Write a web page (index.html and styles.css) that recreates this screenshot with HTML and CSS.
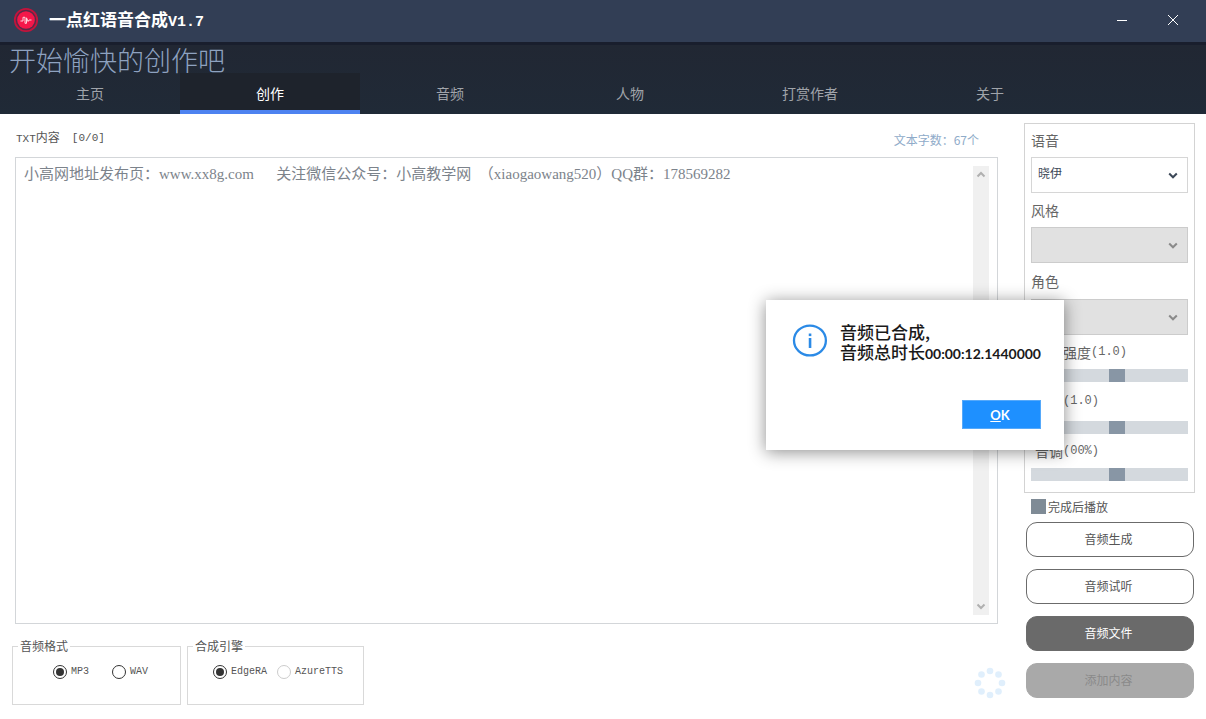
FILE: index.html
```html
<!DOCTYPE html>
<html lang="zh-CN">
<head>
<meta charset="utf-8">
<title>一点红语音合成V1.7</title>
<link rel="stylesheet" href="styles.css">
</head>
<body>
<div class="window">
  <header class="titlebar">
    <svg class="logo" viewBox="0 0 26 26" aria-hidden="true">
      <circle cx="13" cy="13" r="11.2" fill="#5a2a48" stroke="#c3143c" stroke-width="1.8"/>
      <circle cx="13" cy="13" r="8.8" fill="#f5174a"/>
      <path d="M7.5 14h2.500V10.300h2v6h1.500v-5.500l1.600 3.700.9-1.500h2.500" fill="none" stroke="#ffd5dd" stroke-width="1"/>
    </svg>
    <h1 class="app-name">一点红语音合成<span class="app-version">V1.7</span></h1>
    <div class="window-controls">
      <button class="window-button" type="button" aria-label="最小化">
        <svg viewBox="0 0 12 12"><path d="M1 6.5h10"/></svg>
      </button>
      <button class="window-button" type="button" aria-label="关闭">
        <svg viewBox="0 0 12 12"><path d="M1 1l10 10M11 1L1 11"/></svg>
      </button>
    </div>
  </header>

  <div class="banner">
    <p class="greeting">开始愉快的创作吧</p>
    <nav class="tabs">
      <a class="tab" href="#home">主页</a>
      <a class="tab tab-active" href="#create" aria-current="page">创作</a>
      <a class="tab" href="#audio">音频</a>
      <a class="tab" href="#people">人物</a>
      <a class="tab" href="#reward">打赏作者</a>
      <a class="tab" href="#about">关于</a>
    </nav>
  </div>

  <main class="workspace">
    <section class="editor-column">
      <div class="editor-head">
        <label class="editor-label" for="content"><span class="mono">TXT</span>内容</label>
        <span class="mono progress">[0/0]</span>
        <span class="char-count">文本字数：67个</span>
      </div>
      <div class="editor">
        <textarea id="content" class="editor-text" spellcheck="false">小高网地址发布页：www.xx8g.com&ensp;&ensp;&ensp;关注微信公众号：小高教学网&ensp;（xiaogaowang520）QQ群：178569282</textarea>
        <div class="scrollbar" aria-hidden="true">
          <svg viewBox="0 0 16 16"><path d="M4.500 10.500L8 7l3.500 3.500"/></svg>
          <svg viewBox="0 0 16 16"><path d="M4.500 5.500L8 9l3.500-3.500"/></svg>
        </div>
      </div>
      <div class="editor-foot">
        <fieldset class="group">
          <legend>音频格式</legend>
          <div class="options options-wide">
            <label class="option"><input type="radio" name="format" checked>MP3</label>
            <label class="option"><input type="radio" name="format">WAV</label>
          </div>
        </fieldset>
        <fieldset class="group">
          <legend>合成引擎</legend>
          <div class="options">
            <label class="option"><input type="radio" name="engine" checked>EdgeRA</label>
            <label class="option"><input type="radio" name="engine" disabled>AzureTTS</label>
          </div>
        </fieldset>
        <svg class="spinner" viewBox="0 0 32 32" aria-hidden="true">
          <circle cx="16" cy="4" r="3.300"/><circle cx="24.500" cy="7.500" r="3.300"/>
          <circle cx="28" cy="16" r="3.300"/><circle cx="24.500" cy="24.500" r="3.300"/>
          <circle cx="16" cy="28" r="3.300"/><circle cx="7.500" cy="24.500" r="3.300"/>
          <circle cx="4" cy="16" r="3.300"/><circle cx="7.500" cy="7.500" r="3.300"/>
        </svg>
      </div>
    </section>

    <aside class="settings">
      <div class="panel">
        <label class="field-label field-label-first" for="voice">语音</label>
        <div class="picker">
          <select id="voice"><option>晓伊</option></select>
          <svg viewBox="0 0 10 8"><path d="M1.200 1.500L5 5.300l3.800-3.800"/></svg>
        </div>
        <label class="field-label" for="style">风格</label>
        <div class="picker picker-disabled">
          <select id="style" disabled><option></option></select>
          <svg viewBox="0 0 10 8"><path d="M1.200 1.500L5 5.300l3.800-3.800"/></svg>
        </div>
        <label class="field-label field-label-role" for="role">角色</label>
        <div class="picker picker-disabled">
          <select id="role" disabled><option></option></select>
          <svg viewBox="0 0 10 8"><path d="M1.200 1.500L5 5.300l3.800-3.800"/></svg>
        </div>
        <label class="field-label slider-label" for="strength">风格强度<span class="mono">(1.0)</span></label>
        <input class="slider" id="strength" type="range" value="55">
        <label class="field-label slider-label field-label-rate" for="rate">语速<span class="mono">(1.0)</span></label>
        <input class="slider" id="rate" type="range" value="55">
        <label class="field-label slider-label" for="pitch">音调<span class="mono">(00%)</span></label>
        <input class="slider" id="pitch" type="range" value="55">
      </div>
      <label class="play-after"><input type="checkbox">完成后播放</label>
      <div class="actions">
        <button class="action" type="button">音频生成</button>
        <button class="action" type="button">音频试听</button>
        <button class="action action-dark" type="button">音频文件</button>
        <button class="action action-muted" type="button" disabled>添加内容</button>
      </div>
    </aside>
  </main>

  <div class="dialog" role="alertdialog" aria-labelledby="dialog-text">
    <div class="dialog-body">
      <svg class="info-icon" viewBox="0 0 36 36" aria-hidden="true">
        <ellipse cx="18" cy="18.500" rx="16" ry="15" fill="none" stroke="#2b8ae6" stroke-width="2.300"/>
        <rect x="16.800" y="16" width="2.600" height="10" fill="#2b8ae6"/>
        <rect x="16.800" y="11.500" width="2.600" height="2.600" fill="#2b8ae6"/>
      </svg>
      <p class="dialog-text" id="dialog-text">音频已合成,<br>音频总时长<span class="duration">00:00:12.1440000</span></p>
    </div>
    <button class="ok-button" type="button"><u>O</u>K</button>
  </div>
</div>
</body>
</html>
```
FILE: styles.css
```css
* {
  box-sizing: border-box;
}

body {
  margin: 0;
  background: #fff;
  color: #555;
  font-family: "Noto Sans CJK SC", sans-serif;
  font-size: 12px;
  line-height: 16px;
}

button,
select,
textarea {
  font: inherit;
  color: inherit;
}

.mono {
  font-family: "Liberation Mono", monospace;
}

.window {
  position: relative;
  display: flex;
  flex-direction: column;
  min-height: 100vh;
}

.titlebar {
  display: flex;
  align-items: center;
  height: 45px;
  padding: 0 8px 2px 13px;
  background: #323e55;
  border-bottom: 3px solid #191e2d;
}

.logo {
  width: 26px;
  height: 26px;
}

.app-name {
  margin: 0 auto 0 10px;
  padding-top: 2px;
  color: #fff;
  font-size: 17px;
  font-weight: 700;
  line-height: 24px;
}

.app-version {
  font-family: "Liberation Mono", monospace;
  font-size: 15px;
}

.window-controls {
  display: flex;
}

.window-button {
  display: grid;
  place-items: center;
  width: 51px;
  height: 40px;
  padding: 0;
  border: 0;
  background: none;
}

.window-button svg {
  width: 12px;
  height: 12px;
  fill: none;
  stroke: #fff;
  stroke-width: 1;
}

.banner {
  background: linear-gradient(#212733, #202a37);
}

.greeting {
  height: 28px;
  margin: 0;
  padding-left: 9px;
  color: #8ea2c0;
  font-size: 27px;
  font-weight: 300;
  line-height: 30px;
}

.tabs {
  display: flex;
}

.tab {
  width: 180px;
  height: 41px;
  border-bottom: 4px solid transparent;
  color: #a0a4aa;
  font-size: 14px;
  line-height: 40px;
  text-align: center;
  text-decoration: none;
}

.tab-active {
  border-color: #4d82f0;
  background: #1e232c;
  color: #fff;
}

.workspace {
  display: flex;
  flex: 1;
  gap: 18px;
  padding: 0 11px 0 12px;
}

.editor-column {
  display: flex;
  flex: 1;
  flex-direction: column;
  padding-bottom: 14px;
}

.editor-head {
  display: flex;
  align-items: center;
  height: 43px;
  padding: 4px 27px 0 4px;
}

.editor-label .mono {
  font-size: 11px;
}

.progress {
  margin-left: 12px;
  font-size: 11px;
}

.char-count {
  margin-left: auto;
  padding-top: 4px;
  color: #8fabc9;
}

.editor {
  display: flex;
  flex: 1;
  margin: 0 8px 0 3px;
  padding: 8px;
  border: 1px solid #d3d6d9;
}

.editor-text {
  flex: 1;
  padding: 0;
  border: 0;
  outline: 0;
  overflow: hidden;
  resize: none;
  color: #7c838b;
  font-family: "Liberation Serif", "Noto Sans CJK SC", serif;
  font-size: 15px;
  line-height: 16px;
}

.scrollbar {
  display: flex;
  flex-direction: column;
  justify-content: space-between;
  width: 16px;
  background: #f0f0f0;
}

.scrollbar svg {
  width: 16px;
  height: 16px;
  fill: none;
  stroke: #b0b0b0;
  stroke-width: 2;
}

.editor-foot {
  display: flex;
  gap: 6px;
  padding-top: 14px;
}

.group {
  height: 67px;
  margin: 0;
  padding: 0 20px 0 25px;
  border: 1px solid #d9d9d9;
}

.group:first-child {
  padding: 0 32px 0 40px;
}

.group legend {
  margin-left: -20px;
  padding: 0 2px;
  line-height: 16px;
}

.group:first-child legend {
  margin-left: -35px;
}

.options {
  display: flex;
  gap: 10px;
  padding-top: 10px;
}

.options-wide {
  gap: 23px;
}

.option {
  display: flex;
  align-items: center;
  gap: 4px;
  font-family: "Liberation Mono", monospace;
  font-size: 10px;
}

.option input {
  appearance: none;
  display: grid;
  place-items: center;
  width: 14px;
  height: 14px;
  margin: 0;
  border: 1px solid #333;
  border-radius: 50%;
}

.option input:checked::before {
  content: "";
  width: 8px;
  height: 8px;
  border-radius: 50%;
  background: #333;
}

.option input:disabled {
  border-color: #ccc;
}

.spinner {
  width: 32px;
  height: 32px;
  margin: 29px 0 0 auto;
  fill: #e0effc;
}

.settings {
  width: 171px;
  padding-top: 9px;
}

.panel {
  display: flex;
  flex-direction: column;
  padding: 0 6px 11px;
  border: 1px solid #d3d3d3;
}

.field-label {
  display: flex;
  align-items: center;
  height: 34px;
  padding-bottom: 1px;
  color: #666;
  font-size: 14px;
}

.field-label-first {
  height: 33px;
}

.field-label-role {
  height: 36px;
}

.field-label-rate {
  height: 39px;
}

.slider-label {
  padding-left: 4px;
}

.slider-label .mono {
  font-size: 12px;
}

.picker {
  position: relative;
  color: #3c4858;
}

.picker select {
  appearance: none;
  display: block;
  width: 100%;
  height: 36px;
  padding: 0 24px 4px 6px;
  border: 1px solid #d6d6d6;
  border-radius: 0;
  background: #fff;
}

.picker svg {
  position: absolute;
  right: 10px;
  top: 15px;
  width: 10px;
  height: 8px;
  fill: none;
  stroke: currentColor;
  stroke-width: 2;
  pointer-events: none;
}

.picker-disabled {
  color: #8a8a8a;
}

.picker-disabled select {
  border-color: #ccc;
  background: #e1e1e1;
  opacity: 1;
}

.slider {
  appearance: none;
  width: 100%;
  height: 13px;
  margin: 0;
  background: #d4d9de;
}

.slider::-webkit-slider-thumb {
  appearance: none;
  width: 16px;
  height: 13px;
  background: #8896a5;
}

.play-after {
  display: flex;
  align-items: center;
  gap: 2px;
  height: 29px;
  padding: 0 0 2px 7px;
}

.play-after input {
  appearance: none;
  width: 15px;
  height: 15px;
  margin: 0;
  background: #7f8b96;
}

.actions {
  display: flex;
  flex-direction: column;
  gap: 12px;
  padding: 0 1px 0 2px;
}

.action {
  height: 35px;
  padding: 0 3px 2px 0;
  border: 1px solid #6b6b6b;
  border-radius: 11px;
  background: #fff;
}

.action-dark {
  background: #6a6a6a;
  color: #fff;
}

.action-muted {
  border-color: #a9a9a9;
  background: #a9a9a9;
  color: #8a8a8a;
}

.dialog {
  position: absolute;
  top: 300px;
  right: 142px;
  display: flex;
  flex-direction: column;
  justify-content: space-between;
  width: 298px;
  height: 150px;
  padding: 22px 23px 21px 26px;
  background: #fff;
  box-shadow: 0 2px 16px rgba(0, 0, 0, 0.45);
}

.dialog-body {
  display: flex;
  gap: 12px;
}

.info-icon {
  width: 36px;
  height: 36px;
}

.dialog-text {
  margin: 0;
  color: #1a1a1a;
  font-size: 17px;
  font-weight: 500;
  line-height: 20px;
  white-space: nowrap;
}

.duration {
  font-family: Lato, sans-serif;
  font-size: 14px;
  font-weight: 700;
}

.ok-button {
  align-self: flex-end;
  width: 79px;
  height: 29px;
  padding: 0 3px 0 0;
  border: 1px solid #56a9fa;
  background: #1e90ff;
  color: #fff;
  font-family: Lato, sans-serif;
  font-size: 13px;
  font-weight: 700;
}
```
